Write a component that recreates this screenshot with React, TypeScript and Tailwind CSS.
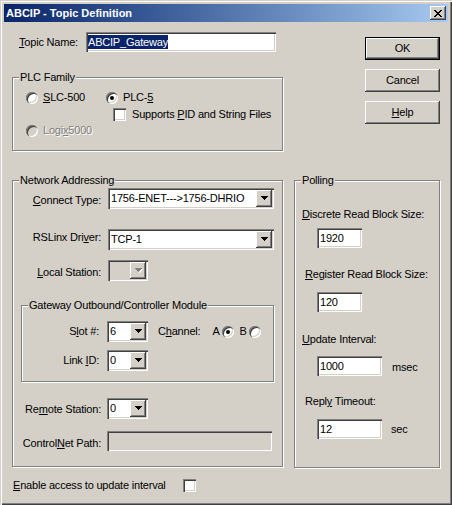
import type { ReactNode } from 'react';

const sunken =
    'shadow-[inset_1px_1px_#808080,inset_2px_2px_#404040,inset_-1px_-1px_#ffffff,inset_-2px_-2px_#d4d0c8]';
const raised =
    'shadow-[inset_-1px_-1px_#404040,inset_1px_1px_#ffffff,inset_-2px_-2px_#808080,inset_2px_2px_#d4d0c8]';

function U({ children }: { children: ReactNode }) {
    return <span className="underline decoration-1 underline-offset-[1px]">{children}</span>;
}

function Arrow({ disabled }: { disabled?: boolean }) {
    const d = 'M0 0h7v1h-1v1h-1v1h-1v1h-1v-1h-1v-1h-1v-1h-1z';
    return (
        <svg width="8" height="5" shapeRendering="crispEdges">
            {disabled && <path d={d} fill="#ffffff" transform="translate(1 1)" />}
            <path d={d} fill={disabled ? '#808080' : '#000000'} />
        </svg>
    );
}

function CloseX() {
    const px = [
        [0, 0, 2], [6, 0, 2],
        [1, 1, 2], [5, 1, 2],
        [2, 2, 4],
        [3, 3, 2],
        [2, 4, 4],
        [1, 5, 2], [5, 5, 2],
        [0, 6, 2], [6, 6, 2],
    ];
    return (
        <svg width="8" height="7" shapeRendering="crispEdges">
            {px.map(([x, y, w], i) => (
                <rect key={i} x={x} y={y} width={w} height={1} fill="#000" />
            ))}
        </svg>
    );
}

function Combo({ value, className, disabled }: { value?: string; className: string; disabled?: boolean }) {
    return (
        <div className={`flex h-[21px] p-[2px] ${sunken} ${disabled ? 'bg-[#d4d0c8]' : 'bg-white'} ${className}`}>
            <span className="flex flex-1 items-center pl-[1px]">{value}</span>
            <div className={`flex w-[16px] items-center justify-center bg-[#d4d0c8] pl-[1px] ${raised}`}>
                <Arrow disabled={disabled} />
            </div>
        </div>
    );
}

function Field({ value, className, disabled }: { value?: string; className: string; disabled?: boolean }) {
    return (
        <div
            className={`flex h-[20px] items-center pl-[3px] ${sunken} ${disabled ? 'bg-[#d4d0c8]' : 'bg-white'} ${className}`}
        >
            {value}
        </div>
    );
}

function Radio({ checked, disabled }: { checked?: boolean; disabled?: boolean }) {
    return (
        <div
            className={`flex h-[12px] w-[12px] shrink-0 items-center justify-center rounded-full ${sunken} ${disabled ? 'bg-[#d4d0c8]' : 'bg-white'}`}
        >
            {checked && <div className="h-[4px] w-[4px] rounded-full bg-black" />}
        </div>
    );
}

function Check() {
    return <div className={`h-[13px] w-[13px] shrink-0 bg-white ${sunken}`} />;
}

function Group({ label, className, children }: { label: string; className: string; children?: ReactNode }) {
    return (
        <div className={`relative border border-[#808080] shadow-[inset_1px_1px_#ffffff,1px_1px_#ffffff] ${className}`}>
            <span className="absolute -top-[7px] left-[6px] bg-[#d4d0c8] px-[1px]">{label}</span>
            {children}
        </div>
    );
}

function Btn({ children, isDefault }: { children: ReactNode; isDefault?: boolean }) {
    if (isDefault) {
        return (
            <div className="h-[23px] w-[75px] border border-black">
                <div className={`flex h-full w-full items-center justify-center ${raised}`}>{children}</div>
            </div>
        );
    }
    return <div className={`flex h-[23px] w-[75px] items-center justify-center ${raised}`}>{children}</div>;
}

export default function App() {
    return (
        <div className="flex h-[505px] w-[452px] flex-col bg-[#d4d0c8] p-[4px] font-['Liberation_Sans',Arial,sans-serif] text-[11px] leading-[13px] tracking-[-0.2px] text-black shadow-[inset_1px_1px_#d4d0c8,inset_2px_2px_#ffffff,inset_-1px_-1px_#404040,inset_-2px_-2px_#808080]">
            {/* title bar */}
            <div className="flex h-[18px] shrink-0 items-center bg-linear-to-r from-[#0a246a] to-[#a6caf0] pl-[2px] pr-[2px]">
                <span className="font-bold tracking-normal text-white">ABCIP - Topic Definition</span>
                <div className={`ml-auto flex h-[14px] w-[16px] items-center justify-center bg-[#d4d0c8] ${raised}`}>
                    <CloseX />
                </div>
            </div>

            <div className="flex flex-1 flex-col">
                <div className="flex">
                    <div className="ml-[8px] w-[271px]">
                        <div className="mt-[10px] flex items-center">
                            <span className="ml-[7px] w-[67px]">
                                <U>T</U>opic Name:
                            </span>
                            <div className={`flex h-[20px] w-[190px] items-center bg-white pl-[2px] ${sunken}`}>
                                <span className="h-[14px] bg-[#0a246a] leading-[14px] text-white">ABCIP_Gateway</span>
                            </div>
                        </div>

                        <Group label="PLC Family" className="mt-[25px] h-[74px] w-[271px]">
                            <div className="mt-[13px] flex h-[13px] items-center">
                                <div className="ml-[13px] flex w-[80px] items-center gap-[5px]">
                                    <Radio />
                                    <span>
                                        <U>S</U>LC-500
                                    </span>
                                </div>
                                <div className="flex items-center gap-[5px]">
                                    <Radio checked />
                                    <span>
                                        PLC-<U>5</U>
                                    </span>
                                </div>
                            </div>
                            <div className="ml-[100px] mt-[4px] flex h-[13px] items-center gap-[6px]">
                                <Check />
                                <span>
                                    Supports <U>P</U>ID and String Files
                                </span>
                            </div>
                            <div className="ml-[13px] mt-[3px] flex h-[13px] items-center gap-[5px]">
                                <Radio disabled />
                                <span className="text-[#808080] [text-shadow:1px_1px_0_#ffffff]">
                                    Logi<U>x</U>5000
                                </span>
                            </div>
                        </Group>
                    </div>

                    <div className="ml-[82px] mt-[15px] flex flex-col gap-[9px]">
                        <Btn isDefault>OK</Btn>
                        <Btn>Cancel</Btn>
                        <Btn>
                            <span>
                                <U>H</U>elp
                            </span>
                        </Btn>
                    </div>
                </div>

                <div className="mt-[29px] flex">
                    <Group label="Network Addressing" className="ml-[8px] h-[287px] w-[271px]">
                        <div className="mt-[7px] flex items-start">
                            <span className="mt-[6px] w-[88px] text-right">
                                <U>C</U>onnect Type:
                            </span>
                            <Combo className="ml-[7px] w-[166px]" value="1756-ENET--->1756-DHRIO" />
                        </div>
                        <div className="mt-[20px] flex items-start">
                            <span className="mt-[2px] w-[88px] text-right">
                                RSLinx Dri<U>v</U>er:
                            </span>
                            <Combo className="ml-[7px] w-[166px]" value="TCP-1" />
                        </div>
                        <div className="mt-[10px] flex items-start">
                            <span className="mt-[6px] w-[88px] text-right">
                                <U>L</U>ocal Station:
                            </span>
                            <Combo className="ml-[7px] w-[40px]" disabled />
                        </div>

                        <Group label="Gateway Outbound/Controller Module" className="ml-[8px] mt-[24px] h-[77px] w-[253px]">
                            <div className="mt-[15px] flex items-center">
                                <span className="w-[77px] text-right">
                                    S<U>l</U>ot #:
                                </span>
                                <Combo className="ml-[8px] w-[41px]" value="6" />
                                <span className="ml-[10px]">
                                    C<U>h</U>annel:
                                </span>
                                <span className="ml-[12px]">A</span>
                                <div className="ml-[2px]">
                                    <Radio checked />
                                </div>
                                <span className="ml-[6px]">B</span>
                                <div className="ml-[2px]">
                                    <Radio />
                                </div>
                            </div>
                            <div className="mt-[8px] flex items-center">
                                <span className="w-[77px] text-right">
                                    Link <U>I</U>D:
                                </span>
                                <Combo className="ml-[8px] w-[41px]" value="0" />
                            </div>
                        </Group>

                        <div className="mt-[16px] flex items-start">
                            <span className="mt-[5px] w-[88px] text-right">
                                Re<U>m</U>ote Station:
                            </span>
                            <Combo className="ml-[6px] w-[41px]" value="0" />
                        </div>
                        <div className="mt-[12px] flex items-start">
                            <span className="mt-[6px] w-[88px] text-right">
                                Control<U>N</U>et Path:
                            </span>
                            <Field className="ml-[6px] w-[165px]" disabled />
                        </div>
                    </Group>

                    <Group label="Polling" className="ml-[11px] h-[288px] w-[146px]">
                        <div className="ml-[7px] mt-[27px]">
                            <U>D</U>iscrete Read Block Size:
                        </div>
                        <Field className="ml-[22px] mt-[7px] w-[45px]" value="1920" />
                        <div className="ml-[10px] mt-[20px]">
                            <U>R</U>egister Read Block Size:
                        </div>
                        <Field className="ml-[22px] mt-[11px] w-[45px]" value="120" />
                        <div className="ml-[7px] mt-[21px]">
                            <U>U</U>pdate Interval:
                        </div>
                        <div className="ml-[22px] mt-[10px] flex items-center">
                            <Field className="w-[65px]" value="1000" />
                            <span className="ml-[10px] mt-[2px]">msec</span>
                        </div>
                        <div className="ml-[10px] mt-[19px]">
                            Repl<U>y</U> Timeout:
                        </div>
                        <div className="ml-[22px] mt-[11px] flex items-center">
                            <Field className="w-[65px]" value="12" />
                            <span className="ml-[9px]">sec</span>
                        </div>
                    </Group>
                </div>

                <div className="ml-[9px] mt-[11px] flex h-[13px] items-center">
                    <span className="w-[170px]">
                        <U>E</U>nable access to update interval
                    </span>
                    <Check />
                </div>
            </div>
        </div>
    );
}
